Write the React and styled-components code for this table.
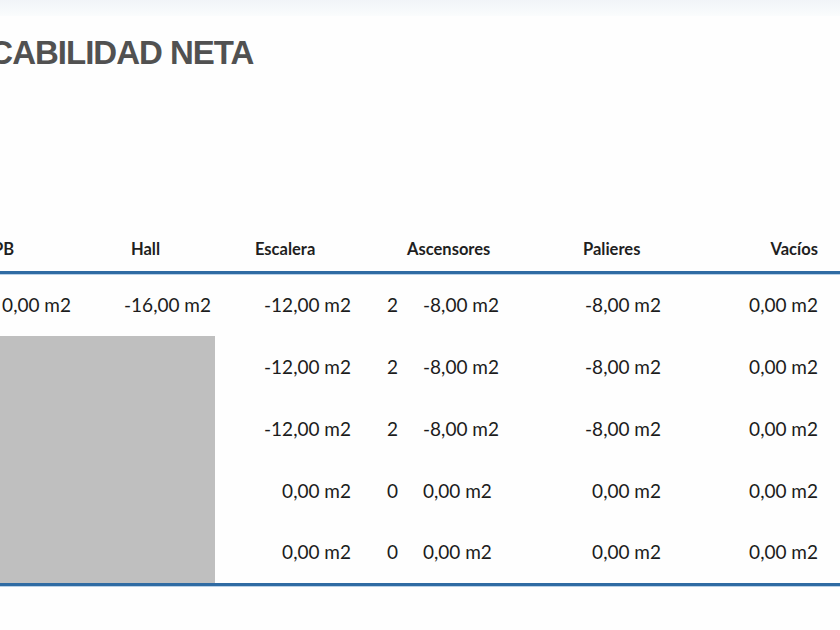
import React from 'react';
import styled, { createGlobalStyle } from 'styled-components';

const GlobalStyle = createGlobalStyle`
  html, body {
    margin: 0;
    padding: 0;
    background: #ffffff;
  }
  body {
    overflow: hidden;
  }
`;

// column widths, header placement and value placement
const columns = [
  { key: 'pb', width: 132, align: 'right', pad: 21 },
  { key: 'hall', width: 123, align: 'right', pad: 4 },
  { key: 'esc', width: 155, align: 'right', pad: 19 },
  { key: 'n', width: 40, align: 'left', pad: 17 },
  { key: 'asc', width: 130, align: 'left', pad: 13 },
  { key: 'pal', width: 140, align: 'right', pad: 19 },
  { key: 'vac', width: 160, align: 'right', pad: 22 },
];

const headers = [
  { title: 'PB', span: 1, align: 'left', pad: 33 },
  { title: 'Hall', span: 1, align: 'left', pad: 39 },
  { title: 'Escalera', span: 1, align: 'left', pad: 40 },
  { title: 'Ascensores', span: 2, align: 'left', pad: 37 },
  { title: 'Palieres', span: 1, align: 'left', pad: 43 },
  { title: 'Vacíos', span: 1, align: 'right', pad: 22 },
];

const full = { esc: '-12,00 m2', n: '2', asc: '-8,00 m2', pal: '-8,00 m2', vac: '0,00 m2' };
const empty = { esc: '0,00 m2', n: '0', asc: '0,00 m2', pal: '0,00 m2', vac: '0,00 m2' };

const rows = [
  { pb: '0,00 m2', hall: '-16,00 m2', ...full },
  full,
  full,
  empty,
  empty,
];

const gridCols = columns.map((c) => `${c.width}px`).join(' ');

const App = () => {
  return (
    <Pagina>
      <GlobalStyle />
      <BarraSuperior />
      <Titulo>EDIFICABILIDAD NETA</Titulo>

      <Tabla>
        <Cabecera>
          {headers.map((h) => (
            <Encabezado key={h.title} $span={h.span} $align={h.align} $pad={h.pad}>
              {h.title}
            </Encabezado>
          ))}
        </Cabecera>

        <Cuerpo>
          <Bloqueado />
          {rows.map((fila, i) =>
            columns.map((c, j) =>
              fila[c.key] ? (
                <Celda
                  key={`${i}-${c.key}`}
                  $row={i + 1}
                  $col={j + 1}
                  $align={c.align}
                  $pad={c.pad}
                >
                  {fila[c.key]}
                </Celda>
              ) : null
            )
          )}
        </Cuerpo>
      </Tabla>
    </Pagina>
  );
};

const Pagina = styled.div`
  width: 840px;
  height: 630px;
  overflow: hidden;
  background: #fefefe;
`;

const BarraSuperior = styled.div`
  height: 16px;
  background: linear-gradient(to bottom, #f1f4f8, #fafcfd);
`;

const Titulo = styled.h1`
  margin: 20px 0 0 -90px;
  font-family: 'Liberation Sans', Arial, sans-serif;
  font-weight: bold;
  font-size: 33px;
  line-height: 33px;
  letter-spacing: -1px;
  color: #515151;
  white-space: nowrap;
`;

const Tabla = styled.div`
  margin: 157px 0 0 -40px;
  width: 880px;
`;

const Cabecera = styled.div`
  display: grid;
  grid-template-columns: ${gridCols};
  height: 45px;
  border-bottom: 3px solid #2f6ba3;
  box-shadow: 0 1px 0 #b9d0e6;
`;

const Encabezado = styled.div`
  grid-column: span ${(p) => p.$span};
  display: flex;
  align-items: flex-end;
  justify-content: ${(p) => (p.$align === 'right' ? 'flex-end' : 'flex-start')};
  padding: 0 ${(p) => (p.$align === 'right' ? p.$pad : 0)}px 12px
    ${(p) => (p.$align === 'left' ? p.$pad : 0)}px;
  font-family: Lato, 'Open Sans', sans-serif;
  font-weight: bold;
  font-size: 16.5px;
  color: #1f1f1f;
`;

const Cuerpo = styled.div`
  display: grid;
  grid-template-columns: ${gridCols};
  grid-template-rows: repeat(4, 62px) 61px;
  border-bottom: 3px solid #2f6ba3;
  box-shadow: 0 1px 0 #b9d0e6;
`;

const Bloqueado = styled.div`
  grid-column: 1 / span 2;
  grid-row: 2 / span 4;
  background: #bfbfbf;
`;

const Celda = styled.div`
  grid-column: ${(p) => p.$col};
  grid-row: ${(p) => p.$row};
  display: flex;
  align-items: center;
  justify-content: ${(p) => (p.$align === 'right' ? 'flex-end' : 'flex-start')};
  padding: 0 ${(p) => (p.$align === 'right' ? p.$pad : 0)}px 2px
    ${(p) => (p.$align === 'left' ? p.$pad : 0)}px;
  font-family: Lato, 'Open Sans', sans-serif;
  font-size: 19px;
  color: #1c1c1c;
`;

export default App;
